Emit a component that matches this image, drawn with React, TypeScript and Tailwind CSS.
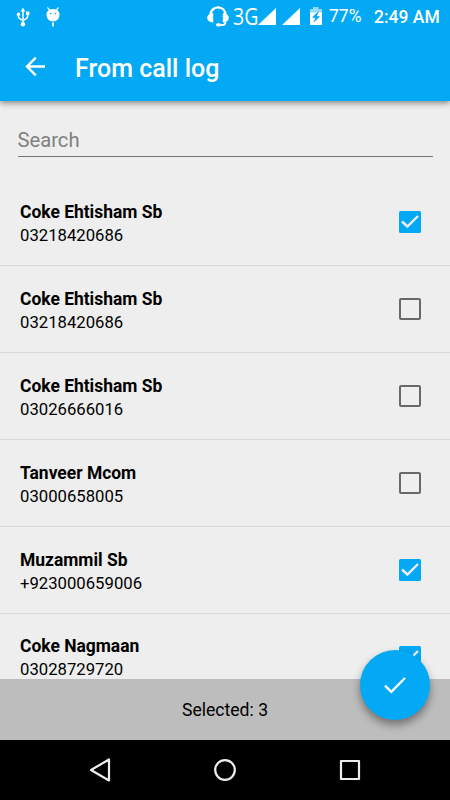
import { useState } from 'react'

interface Contact {
  id: number
  name: string
  phone: string
}

const contacts: Contact[] = [
  { id: 1, name: 'Coke Ehtisham Sb', phone: '03218420686' },
  { id: 2, name: 'Coke Ehtisham Sb', phone: '03218420686' },
  { id: 3, name: 'Coke Ehtisham Sb', phone: '03026666016' },
  { id: 4, name: 'Tanveer Mcom', phone: '03000658005' },
  { id: 5, name: 'Muzammil Sb', phone: '+923000659006' },
  { id: 6, name: 'Coke Nagmaan', phone: '03028729720' },
]

function UsbIcon() {
  return (
    <svg width="14" height="20" viewBox="0 0 14 20" fill="none" stroke="white" strokeWidth="1.5">
      <path d="M7 17V3" />
      <path d="M2.4 7v2.600c0 1 .5 1.600 1.300 2L7 13.600" />
      <path d="M11.600 6v3.600c0 1-.5 1.600-1.300 2L7 13.600" />
      <path d="M7 .8 9.400 4.400H4.600z" fill="white" stroke="none" />
      <circle cx="2.400" cy="7.200" r="1.700" fill="white" stroke="none" />
      <path d="M10 4.600h3.400V8H10z" fill="white" stroke="none" />
      <circle cx="7" cy="17.200" r="2.200" fill="white" stroke="none" />
    </svg>
  )
}

function BugIcon() {
  return (
    <svg width="14" height="20" viewBox="0 0 14 20" fill="none">
      <path d="M1.800.8 4.200 3.600M12.200.8 9.800 3.600" stroke="white" strokeWidth="1.200" strokeLinecap="round" />
      <path d="M7 2c3.800 0 6.500 2.200 6.500 5.600 0 3.800-2.700 7-6.500 7S.5 11.400.5 7.600C.5 4.200 3.200 2 7 2z" fill="white" />
      <circle cx="4.500" cy="6.500" r=".8" fill="#03a9f4" />
      <circle cx="9.500" cy="6.500" r=".8" fill="#03a9f4" />
      <path d="M7 15.500v4" stroke="white" strokeWidth="1.700" />
    </svg>
  )
}

function HeadsetIcon() {
  return (
    <svg width="22" height="21" viewBox="0 0 22 21" fill="none" stroke="white">
      <path d="M3.500 9.500C3.500 4.700 6.600 1.400 11 1.400s7.500 3.300 7.500 8.100" strokeWidth="2.400" />
      <path d="M6.200 7.200v9.200C2.700 16.400.2 14.600.2 11.800s2.500-4.600 6-4.600z" fill="white" stroke="none" />
      <path d="M15.800 7.200v9.200c3.500 0 6-1.800 6-4.600s-2.500-4.600-6-4.600z" fill="white" stroke="none" />
      <path d="M18.300 14.500v2c0 1.700-1 2.500-2.600 2.500H11" strokeWidth="1.800" />
      <rect x="9" y="17.200" width="5" height="3.200" rx="1.600" fill="white" stroke="none" />
    </svg>
  )
}

function SignalIcon() {
  return (
    <svg width="18" height="17" viewBox="0 0 18 17">
      <path d="M18 0v17H0z" fill="white" />
    </svg>
  )
}

function BatteryIcon() {
  return (
    <svg width="14" height="19" viewBox="0 0 14 19">
      <path d="M4 0h5.500v2H13v4H1V2h3z" fill="white" opacity=".6" />
      <path d="M1 5.500h12V18H1z" fill="white" />
      <path d="M10 3.800 3 10.600l3.400.5-2.200 4.700 7-6.300-3.400-.6z" fill="#03a9f4" />
    </svg>
  )
}

function StatusBar() {
  return (
    <div className="flex h-[33px] items-center pr-[9px] pl-4 text-white">
      <UsbIcon />
      <div className="ml-[16px]"><BugIcon /></div>
      <div className="ml-auto flex items-center">
        <HeadsetIcon />
        <span className="ml-[4px] w-[25px] origin-left scale-x-[0.83] font-['Open_Sans'] text-[23.500px] leading-none">3G</span>
        <div className="mb-px"><SignalIcon /></div>
        <div className="mb-px ml-[6px]"><SignalIcon /></div>
        <div className="ml-[9px]"><BatteryIcon /></div>
        <span className="ml-[6px] w-[34px] text-[17.500px] whitespace-nowrap">77%</span>
        <span className="ml-[11px] w-[67px] pt-px text-[17.500px] font-medium whitespace-nowrap">2:49 AM</span>
      </div>
    </div>
  )
}

function Checkbox({ checked }: { checked: boolean }) {
  return (
    <svg width="22" height="22" viewBox="0 0 22 22" fill="none" className="shrink-0">
      {checked ? (
        <>
          <rect width="22" height="22" rx="1.500" fill="#03a9f4" />
          <path d="M3 10.500l5.400 5L19 5" stroke="#eeeeee" strokeWidth="2.400" />
        </>
      ) : (
        <rect x="1" y="1" width="20" height="20" rx="1" stroke="#686868" strokeWidth="2" />
      )}
    </svg>
  )
}

export default function App() {
  const [selected, setSelected] = useState<number[]>([1, 5, 6])
  const [search, setSearch] = useState('')

  function toggle(id: number) {
    setSelected(prev => prev.includes(id) ? prev.filter(s => s !== id) : [...prev, id])
  }

  const visible = contacts.filter(c => c.name.toLowerCase().includes(search.toLowerCase()) || c.phone.includes(search))

  return (
    <div className="flex h-[800px] w-[450px] flex-col overflow-hidden bg-[#eeeeee] font-['Roboto',sans-serif] text-black">
      <header className="relative z-10 h-[101px] shrink-0 bg-[#03a9f4] shadow-[0_2px_6px_rgba(0,0,0,0.45)]">
        <StatusBar />
        <div className="flex h-[68px] items-center pl-[25px] text-white">
          <button aria-label="Back">
            <svg width="21" height="20" viewBox="0 0 21 20" fill="none" stroke="white" strokeWidth="2.400">
              <path d="M20 9.500H2M10.800.6 2 9.500l8.800 8.900" />
            </svg>
          </button>
          <h1 className="ml-[29px] pt-[3px] text-[25px] font-medium">From call log</h1>
        </div>
      </header>

      <div className="mx-[17.500px] mt-[24px] h-[32px] shrink-0 border-b border-[#757575]">
        <input value={search} onChange={e => setSearch(e.target.value)} placeholder="Search"
          className="block h-[30px] w-full bg-transparent text-[20.200px] outline-none placeholder:text-[#808080]" />
      </div>

      <ul className="mt-[22.300px] min-h-0 flex-1 overflow-hidden">
        {visible.map(c => (
          <li key={c.id} onClick={() => toggle(c.id)}
            className="flex h-[86.900px] cursor-pointer items-center justify-between border-b border-[#d9d9d9] pr-[29px] pl-5">
            <div className="pt-[3.600px]">
              <p className="text-[17.450px] leading-[23px] font-bold">{c.name}</p>
              <p className="text-[16.700px] leading-[23px]">{c.phone}</p>
            </div>
            <Checkbox checked={selected.includes(c.id)} />
          </li>
        ))}
      </ul>

      <footer className="relative flex h-[61px] shrink-0 items-center justify-center bg-[#bdbdbd]">
        <span className="pt-[2px] text-[17.600px]">Selected: {selected.length}</span>
        <button aria-label="Confirm"
          className="absolute -top-[29px] right-5 flex size-[70px] items-center justify-center rounded-full bg-[#03a9f4] shadow-[0_5px_9px_rgba(0,0,0,0.4)]">
          <svg width="22" height="18" viewBox="0 0 22 18" fill="none" stroke="white" strokeWidth="2.300">
            <path d="M1 9.700l6.300 6.100L21 2" />
          </svg>
        </button>
      </footer>

      <nav className="flex h-[60px] shrink-0 items-center justify-between bg-black px-[89px]">
        <svg width="22" height="24" viewBox="0 0 22 24" fill="none" stroke="#eeeeee" strokeWidth="2.200" strokeLinejoin="round">
          <path d="M2 12 20 1.500v21z" />
        </svg>
        <svg width="22" height="22" viewBox="0 0 22 22" fill="none" stroke="#eeeeee" strokeWidth="2.200">
          <circle cx="11" cy="11" r="9.800" />
        </svg>
        <svg width="22" height="22" viewBox="0 0 22 22" fill="none" stroke="#eeeeee" strokeWidth="2.200" strokeLinejoin="round">
          <rect x="2" y="2" width="18" height="18" />
        </svg>
      </nav>
    </div>
  )
}
